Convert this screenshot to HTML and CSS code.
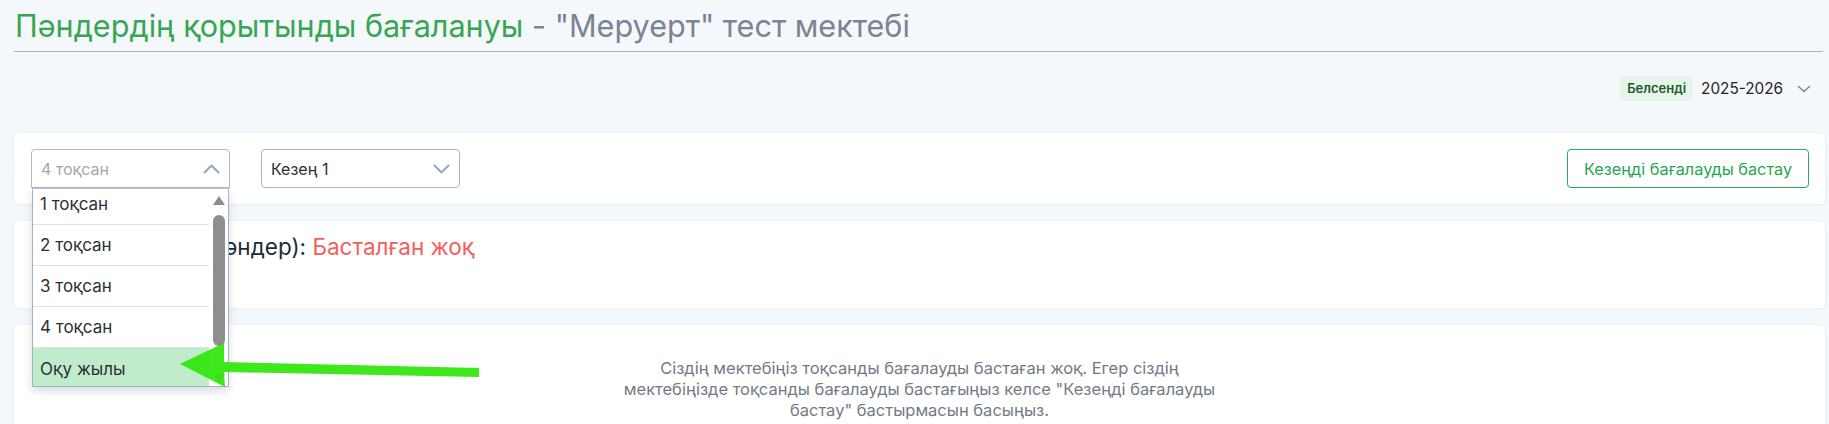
FILE: index.html
```html
<!DOCTYPE html>
<html lang="kk">
<head>
<meta charset="utf-8">
<title>Пәндердің қорытынды бағалануы</title>
<link rel="stylesheet" href="styles.css">
</head>
<body>
<div class="page">
  <h1 class="title"><span class="title-main">Пәндердің қорытынды бағалануы</span><span class="title-school"> - "Меруерт" тест мектебі</span></h1>

  <div class="year-row">
    <span class="badge">Белсенді</span>
    <span class="year">2025-2026</span>
    <svg class="year-chevron" width="14" height="8" viewBox="0 0 14 8"><path d="M1.5 1.5 L7 6.5 L12.5 1.5" fill="none" stroke="#7f8796" stroke-width="1.6" stroke-linecap="round" stroke-linejoin="round"/></svg>
  </div>

  <div class="card filters">
    <div class="filter-group">
      <div class="select-wrap">
        <div class="select open">
          <span class="placeholder">4 тоқсан</span>
          <svg class="chev" width="17" height="10" viewBox="0 0 17 10"><path d="M1.5 8.5 L8.5 1.5 L15.5 8.5" fill="none" stroke="#91a9c2" stroke-width="2" stroke-linecap="round" stroke-linejoin="round"/></svg>
        </div>
        <div class="dropdown">
          <div class="options">
            <div class="option">1 тоқсан</div>
            <div class="option">2 тоқсан</div>
            <div class="option">3 тоқсан</div>
            <div class="option">4 тоқсан</div>
            <div class="option active">Оқу жылы</div>
          </div>
          <div class="scrollbar">
            <span class="sb-up"></span>
            <span class="sb-thumb"></span>
            <span class="sb-space"></span>
            <span class="sb-down"></span>
          </div>
        </div>
      </div>
      <div class="select">
        <span class="value">Кезең 1</span>
        <svg class="chev" width="17" height="10" viewBox="0 0 17 10"><path d="M1.5 1.5 L8.5 8.5 L15.5 1.5" fill="none" stroke="#91a9c2" stroke-width="2" stroke-linecap="round" stroke-linejoin="round"/></svg>
      </div>
    </div>
    <button class="btn-start">Кезеңді бағалауды бастау</button>
  </div>

  <div class="card status">
    <div class="status-line">Бағалау кезеңі (Пәндер): <span class="status-red">Басталған жоқ</span></div>
  </div>

  <div class="card info">
    <p class="info-text">Сіздің мектебіңіз тоқсанды бағалауды бастаған жоқ. Егер сіздің мектебіңізде тоқсанды бағалауды бастағыңыз келсе "Кезеңді бағалауды бастау" бастырмасын басыңыз.</p>
  </div>

  <svg class="annot-arrow" width="1829" height="424" viewBox="0 0 1829 424">
    <path d="M180 364 L224 343 L224 362 L479 368 L479 377 L224 372 L225 387 Z" fill="#2fe60c" fill-opacity="0.93"/>
  </svg>
</div>
</body>
</html>
```

FILE: styles.css
```css
* { box-sizing: border-box; }

html, body {
  margin: 0;
  background: #f5f8fb;
  font-family: Inter, "Noto Sans", sans-serif;
  color: #1f2733;
}

.page {
  position: relative;
  padding: 0 4px 0 14px;
  height: 424px;
  overflow: hidden;
}

.title {
  margin: 0 2px 0 0;
  padding: 8px 0 7px 1px;
  font-size: 30.6px;
  line-height: 36px;
  font-weight: 400;
  border-bottom: 1px solid #a9b3c5;
}

.title-main { color: #37a653; }
.title-school { color: #7b8395; }

.year-row {
  display: flex;
  justify-content: flex-end;
  align-items: center;
  margin-top: 24px;
  padding-right: 14px;
  height: 25px;
}

.badge {
  background: #e6f5e9;
  color: #1d5a2a;
  font-size: 13px;
  font-weight: 600;
  height: 25px;
  line-height: 25px;
  padding: 0 7px;
  border-radius: 4px;
}

.year {
  margin-left: 8px;
  font-size: 15.3px;
  color: #1e2430;
}

.year-chevron { margin-left: 14px; }

.card {
  background: #fff;
  border-radius: 6px;
  box-shadow: 0 0 0 1px #edf1f6, 0 1px 3px rgba(30, 50, 80, 0.05);
}

.filters {
  margin-top: 32px;
  padding: 16px 16px 16px 17px;
  display: flex;
  justify-content: space-between;
  align-items: center;
}

.filter-group {
  display: flex;
  gap: 31px;
}

.select-wrap { position: relative; }

.select {
  width: 199px;
  height: 39px;
  border: 1px solid #a7b5c4;
  border-radius: 4px;
  display: flex;
  align-items: center;
  justify-content: space-between;
  padding: 0 9px 0 9px;
  font-size: 16px;
  background: #fff;
}

.select.open {
  border-color: #a9bdd1;
  border-bottom-left-radius: 0;
  border-bottom-right-radius: 0;
}

.placeholder { color: #a2a7ae; }
.value { color: #2a2f37; }

.dropdown {
  position: absolute;
  top: 39px;
  left: 1px;
  width: 197px;
  height: 199px;
  background: #fff;
  border: 1px solid #9fb2c7;
  border-top-color: #b5c4d4;
  box-shadow: 0 4px 8px rgba(20, 40, 70, 0.16);
  display: flex;
  overflow: hidden;
  z-index: 5;
}

.options {
  flex: 1;
  margin-top: -5px;
}

.option {
  height: 41px;
  border-bottom: 1px solid #dce1e7;
  display: flex;
  align-items: center;
  padding-left: 7px;
  font-size: 17px;
  color: #2c3036;
}

.option.active {
  background: #bfedcb;
  border-bottom: none;
}

.scrollbar {
  width: 19px;
  display: flex;
  flex-direction: column;
  align-items: center;
  padding: 7px 0 3px;
  background: #fff;
}

.sb-up {
  width: 0;
  height: 0;
  border-left: 6px solid transparent;
  border-right: 6px solid transparent;
  border-bottom: 9px solid #8d8d8d;
}

.sb-thumb {
  margin-top: 10px;
  width: 12px;
  height: 131px;
  border-radius: 6px;
  background: #8e8e8e;
}

.sb-space { flex: 1; }

.sb-down {
  width: 0;
  height: 0;
  border-left: 6px solid transparent;
  border-right: 6px solid transparent;
  border-top: 9px solid #8d8d8d;
}

.btn-start {
  height: 39px;
  width: 242px;
  border: 1px solid #2ea95a;
  border-radius: 4px;
  background: #fff;
  color: #27a453;
  font-family: Inter, "Noto Sans", sans-serif;
  font-size: 16.3px;
  padding: 0;
}

.status {
  margin-top: 17px;
  height: 87px;
  padding: 12px 17px;
}

.status-line {
  font-size: 22.5px;
  line-height: 28px;
  color: #1f2a3a;
}

.status-red { color: #f2605c; }

.info {
  margin-top: 17px;
  height: 200px;
  padding-top: 33px;
}

.info-text {
  margin: 0 auto;
  max-width: 594px;
  text-align: center;
  font-size: 16.5px;
  line-height: 21px;
  color: #737a86;
}

.annot-arrow {
  position: absolute;
  top: 0;
  left: 0;
  pointer-events: none;
  z-index: 10;
}
```
